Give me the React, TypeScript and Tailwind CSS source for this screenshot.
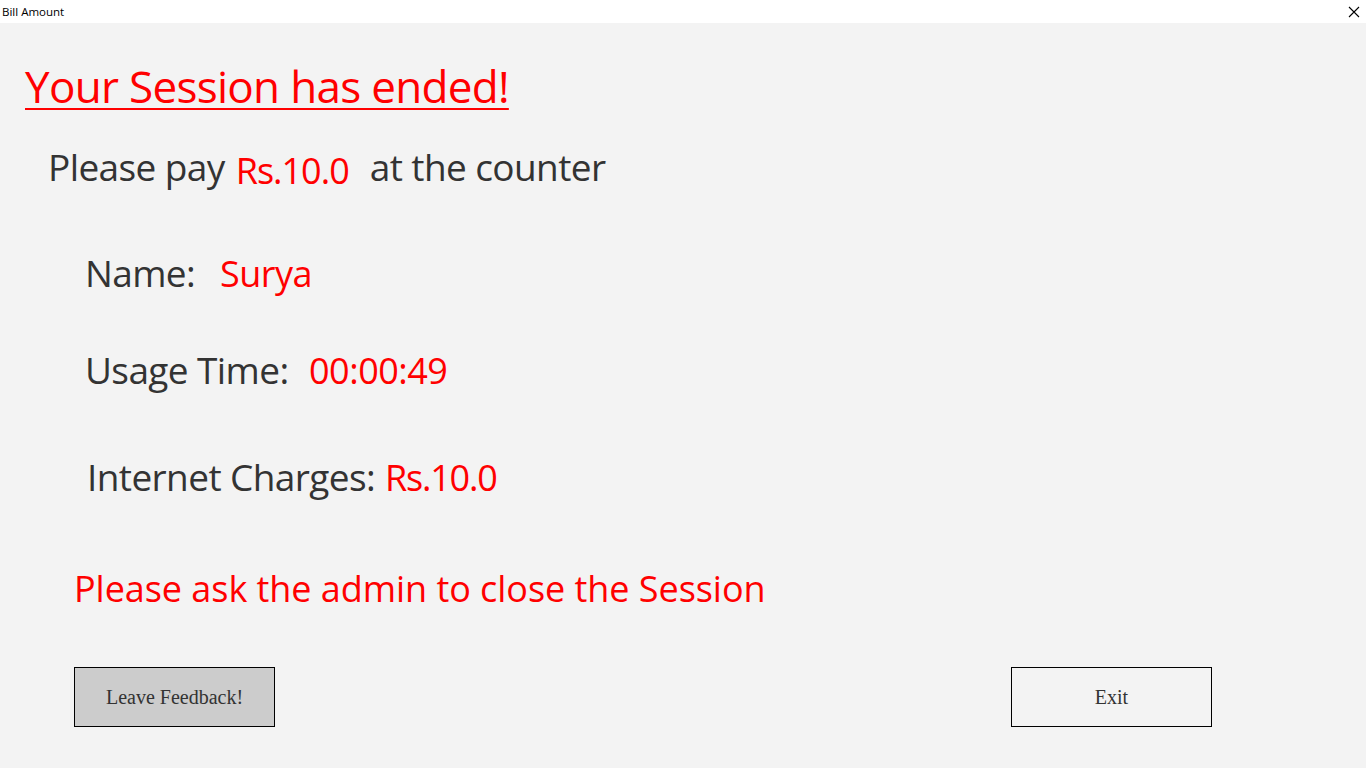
import React from "react";

const sans = "font-['Open_Sans','Noto_Sans',sans-serif]";

export default function App() {
  return (
    <div className={`w-[1366px] h-[768px] bg-[#f3f3f3] flex flex-col overflow-hidden ${sans}`}>
      {/* title bar */}
      <div className="h-[23px] bg-white flex items-center justify-between shrink-0">
        <span className="pl-[2px] text-[11.5px] leading-none text-black">Bill Amount</span>
        <svg width="12" height="12" viewBox="0 0 12 12" className="mr-[6px]">
          <path d="M1 1 L11 11 M11 1 L1 11" stroke="#000" strokeWidth="1.1" />
        </svg>
      </div>

      {/* heading */}
      <div className="mt-[33px] h-[60px] pl-[25px] flex items-center">
        <span className="text-[44px] leading-[60px] tracking-[-0.7px] text-[#ff0000] underline decoration-[2px] underline-offset-[5px] whitespace-nowrap">
          Your Session has ended!
        </span>
      </div>

      {/* please pay */}
      <div className="mt-[31px] h-[40px] pl-[48px] flex items-baseline leading-[40px] text-[#333333] whitespace-nowrap">
        <span className="text-[37px] tracking-[-0.6px]">Please pay</span>
        <span className="ml-[11px] text-[36px] tracking-[-1px] text-[#ff0000] translate-y-[3px]">Rs.10.0</span>
        <span className="ml-[21px] text-[37px] tracking-[-0.6px]">at the counter</span>
      </div>

      {/* name */}
      <div className="mt-[61px] h-[50px] pl-[85px] flex items-baseline leading-[50px] text-[#333333] whitespace-nowrap">
        <span className="w-[135px] shrink-0 text-[37px] tracking-[-0.6px]">Name:</span>
        <span className="text-[36px] tracking-[-0.5px] text-[#ff0000]">Surya</span>
      </div>

      {/* usage time */}
      <div className="mt-[47px] h-[50px] pl-[85px] flex items-baseline leading-[50px] text-[#333333] whitespace-nowrap">
        <span className="w-[224px] shrink-0 text-[37px] tracking-[-0.6px]">Usage Time:</span>
        <span className="text-[36px] tracking-[-0.5px] text-[#ff0000]">00:00:49</span>
      </div>

      {/* internet charges */}
      <div className="mt-[57px] h-[50px] pl-[87px] flex items-baseline leading-[50px] text-[#333333] whitespace-nowrap">
        <span className="w-[298px] shrink-0 text-[37px] tracking-[-0.6px]">Internet Charges:</span>
        <span className="text-[36px] tracking-[-1.2px] text-[#ff0000]">Rs.10.0</span>
      </div>

      {/* admin note */}
      <div className="mt-[62px] h-[50px] pl-[74px] flex items-baseline text-[36px] leading-[50px] tracking-[-0.05px] text-[#ff0000] whitespace-nowrap">
        <span>Please ask the admin to close the Session</span>
      </div>

      {/* buttons */}
      <div className="mt-[53px] pl-[74px] pr-[154px] flex justify-between">
        <button className="w-[201px] h-[60px] bg-[#cccccc] border border-black flex items-center justify-center font-['Liberation_Serif',serif] text-[20px] text-[#333333]">
          Leave Feedback!
        </button>
        <button className="w-[201px] h-[60px] bg-[#f3f3f3] border border-black flex items-center justify-center font-['Liberation_Serif',serif] text-[20px] text-[#333333]">
          Exit
        </button>
      </div>
    </div>
  );
}
